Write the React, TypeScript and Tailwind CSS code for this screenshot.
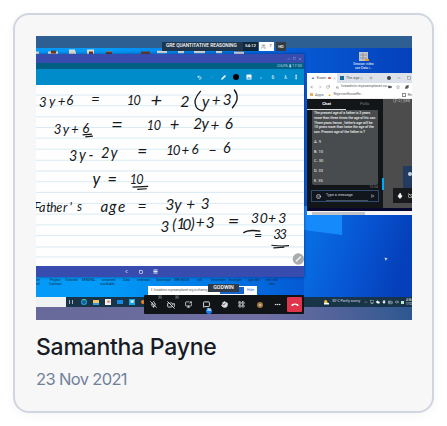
import React from "react";
import {
  MicOff, VideoOff, ScreenShare, MessageSquare, Hand, LayoutGrid, Ellipsis, Phone, Undo2, Redo2,
  Pencil, EllipsisVertical, ChevronLeft, ChevronUp, Square, Menu, ArrowLeft,
  ArrowRight, RotateCw, Lock, Star, Puzzle, Smile, Send, Mic, Cloud, BatteryMedium, Volume2, Monitor,
  X, Minus, Plus, MousePointer2, Video, Users,
} from "lucide-react";

type InkProps = { x: string; y: string | number; size?: number; children: string };

function Ink({ x, y, size = 40, children }: InkProps) {
  return (
    <text x={x} y={y} fontSize={size} className="fill-[#16181b] font-['Lato'] italic">
      {children}
    </text>
  );
}

const RULES = [286, 318, 351, 383, 415, 448, 481, 513, 545, 577, 610, 642, 674, 706, 740, 770];

function Paper() {
  return (
    <svg viewBox="107 256 805 541" preserveAspectRatio="none" className="block h-[181px] w-full bg-[#fdfefd]">
      {RULES.map((y) => (
        <path key={y} d={`M107 ${y}H912`} stroke="#d3e7f2" strokeWidth="2.5" />
      ))}
      <Ink x="116 146 172 198" y="322 319 320 317">3y+6</Ink>
      <Ink x="272" y="316" size={46}>=</Ink>
      <Ink x="380 400" y="316" size={38}>10</Ink>
      <Ink x="451" y="322" size={60}>+</Ink>
      <Ink x="540" y="321" size={48}>2</Ink>
      <Ink x="606 635 668" y="322 319 316" size={46}>y+3</Ink>
      <path d="M601 275Q577 301 588 321Q594 332 609 333M703 271Q722 296 697 324" fill="none" stroke="#16181b" strokeWidth="4" strokeLinecap="round" />

      <Ink x="160 187 212 246" y="403 401 403 398">3y+6</Ink>
      <path d="M247 405L275 403M255 411L278 409" stroke="#16181b" strokeWidth="3.5" />
      <Ink x="332" y="396" size={62}>=</Ink>
      <Ink x="440 461" y="390" size={38}>10</Ink>
      <Ink x="509" y="392" size={50}>+</Ink>
      <Ink x="579 604 631 674" y="388 388 394 387" size={46}>2y+6</Ink>

      <Ink x="206 236 265" y="484 480 479" size={43}>3y-</Ink>
      <Ink x="302 331" y="474" size={44}>2y</Ink>
      <Ink x="411" y="471" size={52}>=</Ink>
      <Ink x="498 518 544 574" y="466 466 466 462" size={40}>10+6</Ink>
      <Ink x="624" y="466" size={48}>–</Ink>
      <Ink x="669" y="459" size={43}>6</Ink>

      <Ink x="277 322" y="554 555" size={49}>y=</Ink>
      <Ink x="389 408" y="553" size={38}>10</Ink>
      <path d="M397 561L444 559M411 568L440 566" stroke="#16181b" strokeWidth="3.5" />

      <Ink x="100 116 138 149 168 188 208 230 237" y="636 636 636 636 636 636 636 634 635" size={38}>Father's</Ink>
      <Ink x="301 326 353" y="636" size={46}>age</Ink>
      <Ink x="412" y="636" size={48}>=</Ink>
      <Ink x="496 522 558 602" y="630 629 631 628" size={46}>3y+3</Ink>
      <Ink x="481 516 529 547 572 587 617" y="694 690 687 688 685 683 683" size={46}>3(10)+3</Ink>
      <Ink x="683" y="682" size={60}>=</Ink>
      <Ink x="753 779 804 835" y="670 669 668 668" size={42}>30+3</Ink>
      <path d="M730 698Q744 687 781 693" fill="none" stroke="#16181b" strokeWidth="4" />
      <Ink x="762" y="718" size={42}>=</Ink>
      <Ink x="820 838" y="717" size={40}>33</Ink>
      <path d="M814 735Q843 739 867 736M820 743L853 741" fill="none" stroke="#16181b" strokeWidth="3.5" />
      <circle cx="895" cy="776" r="17" fill="#a9abac" />
      <path d="M889 782L901 770" stroke="#eeeeee" strokeWidth="5" strokeLinecap="round" />
    </svg>
  );
}

function NotesWindow() {
  return (
    <div className="absolute left-0 top-[18px] flex w-[268px] flex-col shadow-[0_0_3px_rgba(0,20,80,0.6)]">
      <div className="flex h-[9px] items-center justify-end gap-[2px] bg-[#384bae] pr-[2px] text-[#c3c9ef]">
        <Minus size={4} /><Square size={3.5} /><X size={4} />
      </div>
      <div className="flex h-[6px] items-center justify-end bg-[#005f83] pr-[2px] text-[4px] leading-none text-[#b5d8e2]">
        ⊡ 63% ▮ 17:00
      </div>
      <div className="flex h-[16px] items-center justify-end bg-[#008bca] pr-[5px] text-white">
        <Undo2 size={5} strokeWidth={3} className="mr-[8px]" />
        <Redo2 size={4} className="mr-[7px] text-[#43a9dc]" />
        <Pencil size={5} fill="white" className="mr-[7px]" />
        <span className="mr-[7px] size-[6px] rounded-full bg-black" />
        <svg viewBox="0 0 12 12" className="mr-[8px] size-[6px]"><rect x="1" y="1" width="10" height="10" rx="1" fill="white" /><path d="M2 9l2.500-3 2 2 1.500-2 2 3z" fill="#008bca" /></svg>
        <span className="mr-[10px] text-[5px] leading-none">‹</span>
        <span className="mr-[10px] text-[5px] leading-none">6</span>
        <span className="mr-[6px] text-[5px] leading-none">λ</span>
        <EllipsisVertical size={6} strokeWidth={3} />
      </div>
      <Paper />
      <div className="flex h-[11px] items-center gap-[10px] bg-[#384bae] pl-[88px] text-[#e6e8ff]">
        <ChevronLeft size={5} strokeWidth={4} /><Square size={4} strokeWidth={4} /><Menu size={5} strokeWidth={5} />
      </div>
    </div>
  );
}

const QUESTION = [
  "The present age of a father is 3 years",
  "more than three times the age of his son.",
  "Three years hence , father's age will be",
  "10 years more than twice the age of the",
  "son. Present age of the father is ?",
];

function BrowserWindow() {
  return (
    <div className="absolute left-[271px] top-[37px] flex h-[142px] w-[105px] flex-col overflow-hidden bg-white">
      <div className="flex h-[10px] shrink-0 items-center bg-[#dde2ea] text-[3.8px] leading-none text-[#52565c]">
        <div className="flex h-full w-[30px] shrink-0 items-center gap-[2px] bg-white pl-[4px]">
          <span className="text-[#4a73b5]">▲</span><span>Exam</span>
          <span className="size-[2.5px] rounded-full bg-[#e54848]" /><X size={3} />
        </div>
        <span className="ml-[3px] size-[4px] shrink-0 bg-[#126b9a]" />
        <span className="ml-[2px] w-[14px] shrink-0 whitespace-nowrap">The age</span>
        <X size={3} className="shrink-0" /><Plus size={4} className="ml-[6px] shrink-0" />
        <span className="ml-[14px] size-[4px] shrink-0 rounded-full bg-[#3c4045]" />
        <Minus size={4} className="ml-[6px] shrink-0" /><Square size={4} className="ml-[6px] shrink-0" />
      </div>
      <div className="flex h-[8px] shrink-0 items-center text-[#555b61]">
        <ArrowLeft size={4} className="ml-[3px] shrink-0" /><ArrowRight size={4} className="ml-[4px] shrink-0 text-[#999]" />
        <RotateCw size={4} className="ml-[4px] shrink-0" /><Lock size={3} className="ml-[6px] shrink-0" />
        <span className="ml-[2px] w-[45px] shrink-0 whitespace-nowrap text-[3.7px] leading-none">liveadmin.myexamplanet.co...</span>
        <Video size={4} fill="#444" className="ml-[2px] shrink-0" /><Star size={4} className="ml-[4px] shrink-0" />
        <Puzzle size={4} fill="#333" className="ml-[5px] shrink-0" />
      </div>
      <div className="flex h-[8px] shrink-0 items-center border-b border-[#eee] text-[3.8px] leading-none text-[#666]">
        <span className="ml-[3px] size-[3px] bg-[#e6ae69]" /><span className="ml-[2px]">Apps</span>
        <span className="ml-[4px] text-[#e9b32b]">▲</span><span className="ml-[2px] whitespace-nowrap text-[3.5px]">NigerianHouseRe...</span>
        <span className="ml-auto mr-[2px] size-[4px] border border-[#888]" /><span>Re</span>
      </div>
      <div className="flex min-h-0 grow">
        <div className="flex w-[76px] shrink-0 flex-col bg-[#131619]">
          <div className="flex h-[11px] shrink-0 items-center text-center text-[4.2px] leading-none">
            <div className="flex h-full w-[39px] items-center justify-center border-b border-[#ddd] font-bold text-white">Chat</div>
            <div className="grow text-[#777]">Polls</div>
          </div>
          <div className="ml-[5px] flex h-[75px] w-[66px] shrink-0 flex-col rounded-b-[2px] bg-[#494c4e] px-[2px] pt-px text-[#f1f1f1]">
            {QUESTION.map((line) => (
              <div key={line} className="h-[4.8px] whitespace-nowrap text-[3.4px] font-medium leading-[4.8px]">{line}</div>
            ))}
            <div className="mt-[2px] flex flex-col text-[4px] leading-[9.7px]">
              <span>A. 9</span><span>B. 10</span><span>C. 30</span><span>D. 33</span><span>E. 35</span>
            </div>
          </div>
          <div className="h-[5px] shrink-0 pr-[5px] text-right text-[3.5px] leading-[5px] text-[#777]">16:54</div>
          <div className="mx-[4px] flex h-[12px] shrink-0 items-center border border-[#2d4b70] bg-[#10151e] px-[4px] text-[#d5d8dc]">
            <Smile size={5} strokeWidth={3} className="shrink-0" />
            <span className="ml-[5px] mt-px flex h-[9px] w-[44px] items-center whitespace-nowrap border-b border-[#48505b] text-[3.7px] leading-none">Type a message</span>
            <Send size={4} className="ml-[2px] shrink-0 rotate-45" />
          </div>
        </div>
        <div className="flex w-[29px] flex-col bg-[#4c4c4d] text-white">
          <div className="h-[5px] self-end pr-[2px] text-[4.5px] leading-[3px] text-[#aaa]">(y-3) yea</div>
          <div className="mt-[62px] flex h-[22px] w-[9px] items-center self-end bg-[#233b60] pb-[7px] pl-[5px]"><span className="size-[4px] rounded-full bg-[#c8d1e1]" /></div>
          <div className="flex h-[15px] w-[19px] items-center gap-[5px] self-end overflow-hidden bg-[#17191c] pl-[4px]"><Mic size={6} fill="white" strokeWidth={3} className="shrink-0" /><VideoOff size={6} className="shrink-0" /></div>
        </div>
      </div>
      <div className="h-[3px] shrink-0 bg-[#08082f]" />
      <div className="flex h-[4px] shrink-0 items-center bg-[#f4f4f5] pl-[5px]"><div className="h-[3px] w-[53px] bg-[#c2c3c6]" /></div>
      <div className="absolute left-[75px] top-[105px] h-[12px] w-[1.5px] bg-[#00a8fa]" />
    </div>
  );
}

const LABELS = [
  ["0", "ite", "ed"], ["13", "Project", "Contract"], ["29", "Tutorials", ""], ["46", "KENDRA...", ""], ["64", "unnamed", "wordtable..."],
  ["87", "Data", ""], ["101", "webinars...", ""], ["120", "Download", ""], ["138", "GRE BOOK", ""], ["161", "risk", ""],
  ["175", "December", ""], ["193", "Example", ""], ["212", "sph edit", ""], ["230", "test edit", "view"],
];

function Taskbar() {
  return (
    <div className="absolute left-0 top-[261px] flex h-[10px] w-full items-center bg-[#173449] text-white">
      <div className="h-full w-[30px] bg-[#f0f1f1]" />
      <span className="ml-[3px] flex w-[4px] justify-between"><i className="h-[4px] w-px bg-[#aab4bf]" /><i className="h-[4px] w-px bg-[#aab4bf]" /></span>
      <span className="ml-[8px] size-[6px] rounded-full border-[1.5px] border-[#20a4d6] border-t-[#5cd2a2] bg-[#125c9c]" />
      <span className="ml-[6px] h-[5px] w-[6px] border-b-2 border-[#399ad6] bg-[#edc869]" />
      <span className="ml-[6px] flex h-[6px] w-[6px] items-center justify-center bg-[#f3f1eb] text-[4px] leading-none text-[#cf4633]">⊞</span>
      <span className="ml-[6px] h-[4px] w-[6px] bg-[#168ae0]" />
      <span className="ml-[6px] flex size-[6px] items-center justify-center bg-[#13a5ee] text-[4px] font-bold leading-none">W</span>
      <span className="ml-[6px] size-[4px] rounded-full bg-[#e98424]" />
      <div className="ml-auto flex items-center gap-[2px] text-[4.1px] leading-none">
        <svg viewBox="0 0 12 12" className="size-[5px]"><circle cx="4" cy="4" r="4" fill="#f4b72d" /><path d="M0 11V8Q2 5 5 7Q8 4 12 8V11Z" fill="white" /></svg>
        <span className="ml-px mr-[2px] w-[28px] whitespace-nowrap text-[3.6px] text-[#d7dde2]">30°C Partly sunny</span>
        <ChevronUp size={4} /><Monitor size={4} /><Cloud size={4} fill="white" /><Mic size={4} fill="white" /><BatteryMedium size={5} /><Volume2 size={4} />
        <span className="size-[3px] bg-[#baeacb]" />
        <span className="w-[6px] overflow-hidden whitespace-nowrap text-[3px] leading-[4px]">4:56<br />1/12</span>
      </div>
    </div>
  );
}

function MeetingControls() {
  return (
    <div className="absolute left-[108px] top-[259px] flex h-[19px] w-[160px] items-center rounded-[1px] bg-[#101417] text-[#eeeeee]">
      <div className="relative ml-[6px]"><MicOff size={7} strokeWidth={2.5} /><ChevronUp size={4} className="absolute -right-[5px] -top-[6px] bg-[#34383c]" /></div>
      <div className="relative ml-[10px]"><VideoOff size={8} strokeWidth={2.5} /><ChevronUp size={4} className="absolute -right-[4px] -top-[6px] bg-[#34383c]" /></div>
      <ScreenShare size={7} strokeWidth={2.5} className="ml-[10px]" />
      <div className="relative ml-[11px]"><MessageSquare size={7} strokeWidth={3} /><span className="absolute -bottom-[6px] left-[3px] flex size-[6px] items-center justify-center rounded-full bg-[#1778ef] text-[3.5px] font-bold leading-none text-white">26</span></div>
      <Hand size={7} fill="#dddddd" className="ml-[11px]" />
      <LayoutGrid size={7} strokeWidth={2.5} className="ml-[10px]" />
      <span className="ml-[12px] flex size-[6px] items-center justify-center rounded-full bg-[#a27842] text-[4px] leading-none">a</span>
      <Ellipsis size={7} strokeWidth={3} className="ml-[11px]" />
      <div className="ml-auto mr-[2px] flex h-[15px] w-[15px] items-center justify-center rounded-[1px] bg-[#df354a]">
        <svg viewBox="0 0 16 8" className="h-[4px] w-[8px]"><path d="M1 6Q0 3 3 2Q8 0 13 2Q16 3 15 6L12 6L11 4Q8 3 5 4L4 6Z" fill="white" /></svg>
      </div>
    </div>
  );
}

function MeetingRecording() {
  return (
    <div className="relative h-[284px] w-[376px] shrink-0 overflow-hidden bg-linear-to-r from-[#049af7] from-20% via-[#0758d3] via-72% to-[#0540ba] font-['Roboto',sans-serif]">
      <svg viewBox="0 0 376 284" className="absolute inset-0">
        <defs>
          <linearGradient id="beam" x1="0" y1="0" x2="1" y2="0.25">
            <stop offset="0" stopColor="#0874e6" />
            <stop offset="0.6" stopColor="#0754d2" />
            <stop offset="1" stopColor="#0540ba" />
          </linearGradient>
        </defs>
        <rect x="268" y="170" width="108" height="92" fill="url(#beam)" />
        <path d="M268 170H306V199L268 194Z" fill="#158afa" />
        <path d="M0 17h3m9 0h10m11 0h7m11 0h7m12 0h6M33 15h6m12 0h7" stroke="#e2e0d2" strokeWidth="3" />
        <path d="M15 16h5m33 1h4m13 0h6m29 0h9m86 0h8" stroke="#6c3b2c" strokeWidth="3" />
        <path d="M121 16h10m11 0h6m10 0h11m11 0h6m12 1h10" stroke="#d6dbe0" strokeWidth="2.5" />
        <rect x="323" y="16" width="9" height="9" fill="#bfc5c8" />
        <path d="M324 19h7m-7 3h7m-4-5v7" stroke="#92999f" strokeWidth="1" />
        <path d="M329 24h4" stroke="#f39424" strokeWidth="2" />
      </svg>
      <div className="absolute inset-x-0 top-0 h-[12px] bg-[#2d5f92]" />
      <div className="absolute left-[126px] top-[6px] flex h-[9px] items-center text-[4.4px] font-medium leading-none text-white">
        <div className="flex h-full w-[81px] items-center whitespace-nowrap bg-[#20364c] pl-[4px] text-[4.8px]">GRE QUANTITATIVE REASONING</div>
        <div className="flex h-full w-[15px] items-center justify-center bg-[#10263b]">54:12</div>
        <div className="ml-px flex h-full w-[15px] items-center justify-center gap-[3px] bg-white text-[#5d6670]"><Users size={5} /><span>7</span></div>
        <div className="ml-[2px] flex h-full w-[10px] items-center justify-center bg-[#353b42] text-[4px]">HD</div>
      </div>
      <div className="absolute left-[315px] top-[26px] w-[25px] whitespace-nowrap text-center text-[3.3px] leading-[4px] text-white">Session video<br />use Data i...</div>
      {LABELS.map(([x, first, second]) => (
        <div key={x} className="absolute top-[243px] whitespace-nowrap text-center text-[3.3px] leading-[3.5px] text-[#182d3f]" style={{ left: Number(x) }}>{first}<br />{second}</div>
      ))}
      <NotesWindow />
      <BrowserWindow />
      <Taskbar />
      <div className="absolute inset-x-0 bottom-0 h-[13px] bg-linear-to-r from-[#66699a] via-[#706fa3] via-60% to-[#2d5790]" />
      <div className="absolute left-[112px] top-[250px] flex h-[9px] w-[109px] items-center bg-white text-[3.1px] leading-none text-[#555]">
        <span className="w-[72px] whitespace-nowrap pl-[3px]">‖&nbsp; liveadmin.myexamplanet.org is sharing</span>
        <span className="flex h-[7px] w-[24px] items-center justify-end bg-[#1264cf]" />
        <span className="ml-[3px] text-[3.5px] text-[#1779df]">Hide</span>
      </div>
      <div className="absolute left-[172px] top-[248px] flex h-[8px] w-[31px] items-center justify-center bg-[#313c48] text-[5.3px] font-medium leading-none text-white">GODWIN</div>
      <MeetingControls />
      <MousePointer2 size={4} fill="white" className="absolute left-[348px] top-[221px] text-[#bbb]" />
    </div>
  );
}

export default function App() {
  return (
    <main className="h-[426px] w-[447px] overflow-hidden bg-white pl-[13px] pt-[13px]">
      <article className="flex h-[400px] w-[421px] flex-col rounded-[16px] border-2 border-[#d0d5e0] bg-[#f7f7f7] pl-[21px] pt-[21px] font-['Inter',sans-serif] shadow-[0_2px_10px_rgba(40,50,80,0.05)]">
        <MeetingRecording />
        <h2 className="mt-[12px] text-[23px] font-medium leading-[30px] tracking-[-0.25px] text-[#171b25]">Samantha Payne</h2>
        <p className="mt-[6px] text-[16.5px] leading-[22px] tracking-[-0.65px] text-[#71819a]">23 Nov 2021</p>
      </article>
    </main>
  );
}
